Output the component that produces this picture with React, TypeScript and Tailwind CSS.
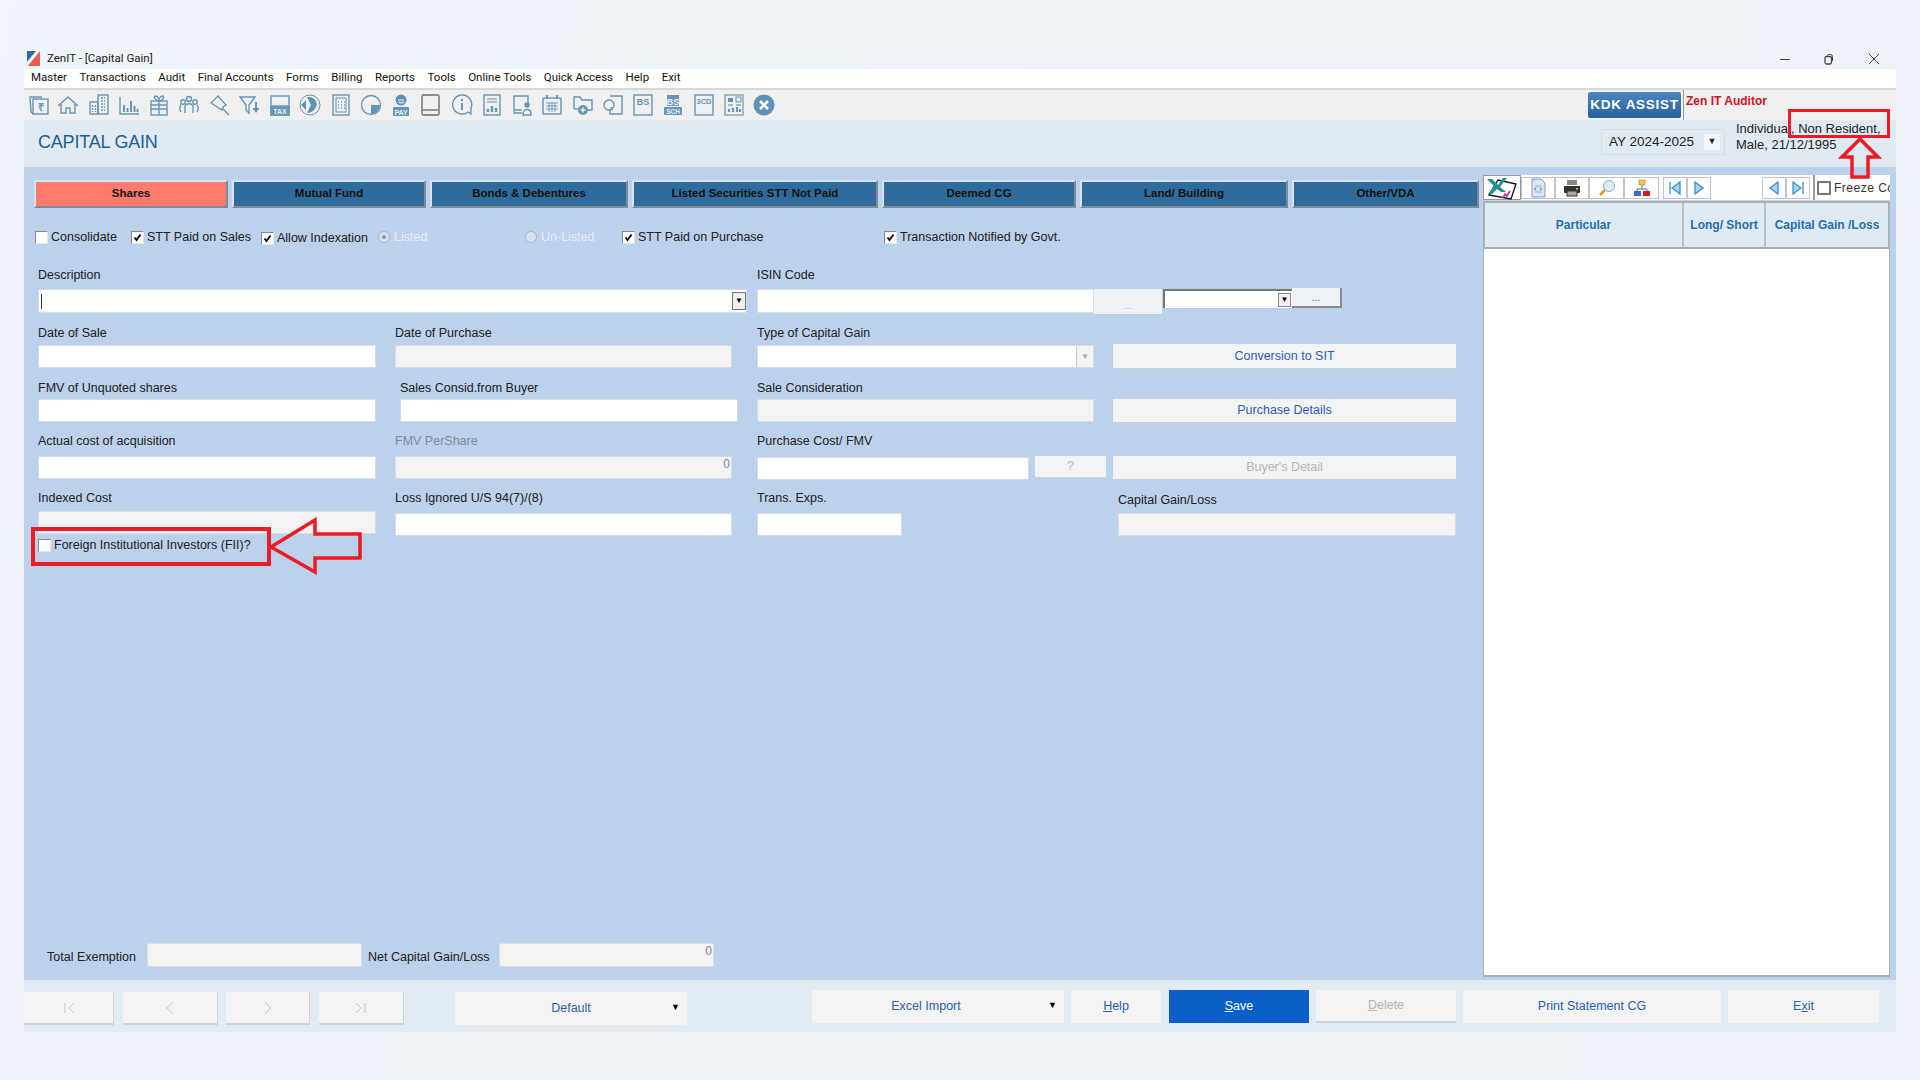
import type { ReactNode } from "react";

const menus = ["Master", "Transactions", "Audit", "Final Accounts", "Forms", "Billing", "Reports", "Tools", "Online Tools", "Quick Access", "Help", "Exit"];

const tabs = [
  { name: "Shares", width: "w-[194px]", active: true },
  { name: "Mutual Fund", width: "w-[194px]" },
  { name: "Bonds & Debentures", width: "w-[198px]" },
  { name: "Listed Securities STT Not Paid", width: "w-[246px]" },
  { name: "Deemed CG", width: "w-[194px]" },
  { name: "Land/ Building", width: "w-[208px]" },
  { name: "Other/VDA", width: "w-[187px]" },
];

function Ico({ children, color = "#6496b8" }: { children: ReactNode; color?: string }) {
  return (
    <svg width="22" height="24" viewBox="0 0 22 24" fill="none" stroke={color} strokeWidth="1.4" className="shrink-0">
      {children}
    </svg>
  );
}

function IconLabel({ x, y, size, children, fill = "#6496b8" }: { x: number; y: number; size: number; children: string; fill?: string }) {
  return (
    <text x={x} y={y} fontSize={size} fontWeight="700" fill={fill} stroke="none" textAnchor="middle" fontFamily="Liberation Sans, sans-serif">
      {children}
    </text>
  );
}

const toolbarIcons = [
  <Ico key="1"><path d="M15 4H3l1 15 3 2" /><rect x="6" y="6" width="15" height="15" /><IconLabel x={13.5} y={18} size={11}>₹</IconLabel></Ico>,
  <Ico key="2"><path d="M1 13 11 4l10 9" /><path d="M4 11v9h5v-5h4v5h5v-9" /></Ico>,
  <Ico key="3"><rect x="10" y="2" width="10" height="19" /><rect x="2" y="9" width="8" height="12" /><path d="M13 5h4M13 8h4M13 11h4M13 14h4M13 17h4M4.500 12v7M7.500 12v7" strokeDasharray="2 1" /></Ico>,
  <Ico key="4"><path d="M2 4v17h19" /><path d="M6 12v7M9.500 15v4M13 8v11M16.500 13v6M19.500 16v3" strokeWidth="2" /></Ico>,
  <Ico key="5"><rect x="3" y="8" width="16" height="14" /><path d="M3 12h16M3 16h16M11 8v14M11 8C7 8 5 3 7.500 3S11 6 11 8c0-2 1-5 3.500-5S15 8 11 8" /></Ico>,
  <Ico key="6"><circle cx="11" cy="6" r="2.500" /><circle cx="5" cy="9" r="2.200" /><circle cx="17" cy="9" r="2.200" /><path d="M7 20v-7c1-3 7-3 8 0v7M3 19c-2-3-1-6 0-7M19 19c2-3 1-6 0-7" /></Ico>,
  <Ico key="7"><path d="M2 10 9 3l8 9-3 2-1 3z" /><path d="M13 15l7 7" /></Ico>,
  <Ico key="8"><path d="M1 4h15l-6 8v8l-3-3v-5z" /><path d="M17 9v8" strokeWidth="2" /><path d="M13.500 15h7L17 20z" fill="#6496b8" stroke="none" /></Ico>,
  <Ico key="9"><rect x="2" y="3" width="18" height="19" /><rect x="2" y="13" width="18" height="9" fill="#6496b8" /><IconLabel x={11} y={21} size={7} fill="#f0f0f0">TAX</IconLabel></Ico>,
  <Ico key="10"><circle cx="11" cy="12" r="10" strokeWidth="1" /><path d="M2 12l5-5v10z" fill="#5f93b6" stroke="none" /><path d="M8 4c9-1 11 7 9 10-1 3-5 6-9 6l4-8z" fill="#5f93b6" stroke="none" /></Ico>,
  <Ico key="11"><rect x="3" y="2" width="16" height="20" /><rect x="6" y="5" width="10" height="14" strokeWidth="1" /><path d="M8 9h1M11 9h1M14 9h1M8 12h1M11 12h1M14 12h1M8 15h1M11 15h1M14 15h1" strokeWidth="1.500" /></Ico>,
  <Ico key="12"><circle cx="11" cy="12" r="9.500" /><path d="M11 12h9a9 9 0 0 1-9 9z" fill="#6496b8" stroke="none" /></Ico>,
  <Ico key="13"><circle cx="11" cy="7" r="5.500" fill="#5f93b6" stroke="none" /><path d="M8 7h6M14 9c-2 1-4 1-5 0" stroke="#f0f0f0" strokeWidth="1.200" /><rect x="3" y="14" width="16" height="9" rx="1" fill="#6496b8" stroke="none" /><IconLabel x={11} y={21.500} size={7} fill="#f0f0f0">PAY</IconLabel></Ico>,
  <Ico key="14" color="#8b8b8b"><rect x="2" y="2" width="17" height="20" rx="1.500" strokeWidth="1.800" /><path d="M3 17h16" strokeWidth="1.800" /></Ico>,
  <Ico key="15"><path d="M20 21l-3-2a9.500 9.500 0 1 1 3-4z" /><path d="M11 10v7" strokeWidth="2" /><path d="M11 6v2" strokeWidth="2" /></Ico>,
  <Ico key="16"><rect x="3" y="2" width="16" height="20" /><path d="M6 6h10M6 9h10" strokeWidth="1" /><path d="M7 19v-3M11 19v-6M15 19v-4" strokeWidth="2.400" /></Ico>,
  <Ico key="17"><path d="M11 20H3V3h14v8M3 17h8" /><circle cx="16" cy="12" r="2" fill="#6496b8" /><path d="M12 21c0-6 8-6 8 0v1h-8z" /></Ico>,
  <Ico key="18"><rect x="2" y="5" width="18" height="16" rx="1" /><path d="M6 2v4M16 2v4" strokeWidth="2" /><path d="M5 10h12M5 13h12M5 16h12M8 9v10M11 9v10M14 9v10" strokeWidth=".9" /></Ico>,
  <Ico key="19"><path d="M2 16V4h6l2 3h10v10h-4" /><path d="M2 16h5" /><circle cx="11" cy="17" r="5" fill="#6496b8" stroke="none" /><path d="M8.500 17h5M11 14.500v5" stroke="#f0f0f0" /></Ico>,
  <Ico key="20"><path d="M8 3h12v18H8v-4" /><circle cx="7" cy="12" r="5" /><path d="M8 17l2-1-1-2" /></Ico>,
  <Ico key="21"><rect x="2" y="2" width="18" height="20" /><IconLabel x={11} y={12} size={9}>BS</IconLabel></Ico>,
  <Ico key="22"><path d="M5 13V2h12v11" fill="#6496b8" stroke="none" /><IconLabel x={11} y={12} size={9} fill="#f0f0f0">BS</IconLabel><rect x="2" y="14" width="18" height="8" rx="1" fill="#6496b8" stroke="none" /><IconLabel x={11} y={21} size={6.500} fill="#f0f0f0">SCH</IconLabel></Ico>,
  <Ico key="23"><rect x="2" y="2" width="18" height="20" /><IconLabel x={11} y={11} size={7.500}>3CD</IconLabel></Ico>,
  <Ico key="24"><rect x="2" y="2" width="18" height="20" stroke="#7ba9a8" /><rect x="5" y="5" width="5" height="4" fill="#5f93b6" stroke="none" /><rect x="13" y="4" width="5" height="5" strokeWidth="1" /><path d="M5 12h5M13 12h5" strokeWidth="1.500" stroke="#7fb5a5" /><path d="M6 19v-3M10 19v-4M14 19v-5M17 19v-3" strokeWidth="2.200" /></Ico>,
  <Ico key="25"><circle cx="11" cy="12" r="10.500" fill="#5f93b6" stroke="none" /><path d="M7 8l8 8M15 8l-8 8" stroke="#fff" strokeWidth="2.600" /></Ico>,
];

function Check({ label, checked, width, dim }: { label: string; checked?: boolean; width?: string; dim?: boolean }) {
  return (
    <div className={`flex items-center gap-[3px] ${width ?? ""}`}>
      <span className="flex h-[13px] w-[13px] shrink-0 items-center justify-center border border-[#8a8a8a] border-r-[#e8e8e8] border-b-[#e8e8e8] bg-white">
        {checked && (
          <svg width="9" height="9" viewBox="0 0 9 9" fill="none" stroke="#000" strokeWidth="1.800">
            <path d="M1.500 4.500 3.500 7 7.500 1.500" />
          </svg>
        )}
      </span>
      <span className={dim ? "text-[#a9b4c4]" : "text-[#202020]"}>{label}</span>
    </div>
  );
}

function Radio({ label, dot, width }: { label: string; dot?: boolean; width: string }) {
  return (
    <div className={`flex items-center gap-[4px] ${width}`}>
      <span className="flex h-[12px] w-[12px] shrink-0 items-center justify-center rounded-full border border-[#aab3bf] bg-[#d8e2ef]">
        {dot && <span className="h-[4px] w-[4px] rounded-full bg-[#8f98a5]" />}
      </span>
      <span className="text-[#e8eef6]">{label}</span>
    </div>
  );
}

function Input({ height = "h-[23px]", off, value, arrow }: { height?: string; off?: boolean; value?: string; arrow?: boolean }) {
  return (
    <div className={`flex w-full items-start justify-end border border-[#d6dce5] ${height} ${off ? "bg-[#f3f3f3]" : "bg-white"}`}>
      {value && <span className="pr-[1px] text-[12px] leading-[14px] text-[#8a8a8a]">{value}</span>}
      {arrow && (
        <span className="flex h-full w-[17px] items-center justify-center border-l border-[#c8c8c8] bg-[#f4f4f4] text-[8px] text-[#a8a8a8]">▼</span>
      )}
    </div>
  );
}

function Field({ label, width, gap, height, off, value, arrow, dim, className = "" }: { label: string; width: string; gap: string; height?: string; off?: boolean; value?: string; arrow?: boolean; dim?: boolean; className?: string }) {
  return (
    <div className={`shrink-0 ${width} ${className}`}>
      <div className={`h-[16px] leading-[16px] ${gap} ${dim ? "text-[#7f8b9b]" : "text-[#202020]"}`}>{label}</div>
      <Input height={height} off={off} value={value} arrow={arrow} />
    </div>
  );
}

function FormButton({ label, className, muted }: { label: string; className: string; muted?: boolean }) {
  return (
    <div className={`flex shrink-0 items-center justify-center border-b border-[#c9d3df] bg-[#f3f3f3] ${muted ? "text-[#b5b5b5]" : "text-[#2d5cb5]"} ${className}`}>
      {label}
    </div>
  );
}

function NavButton({ className, d }: { className: string; d: string }) {
  return (
    <div className={`flex h-[33px] shrink-0 items-center justify-center border-r border-b-2 border-r-[#d0d4da] border-b-[#d0d4da] bg-[#f3f3f3] ${className}`}>
      <svg width="16" height="18" viewBox="0 0 16 18" fill="none" stroke="#c6c6c6" strokeWidth="1">
        <path d={d} />
      </svg>
    </div>
  );
}

function BarButton({ className, children, arrow }: { className: string; children: ReactNode; arrow?: boolean }) {
  return (
    <div className={`relative flex h-[33px] shrink-0 items-center justify-center text-[12.5px] ${className}`}>
      {children}
      {arrow && <span className="absolute right-[7px] top-[9px] text-[9px] text-black">▼</span>}
    </div>
  );
}

function GridTool({ children, width = "w-[34px]" }: { children: ReactNode; width?: string }) {
  return (
    <div className={`flex h-[22px] shrink-0 items-center justify-center border border-[#c4c4c4] bg-white ${width}`}>
      {children}
    </div>
  );
}

function GridNav({ d }: { d: string }) {
  return (
    <div className="flex h-[22px] w-[24px] shrink-0 items-center justify-center border border-[#c4c4c4] bg-white">
      <svg width="16" height="16" viewBox="0 0 16 16" fill="#a9d2ee" stroke="#3f8fc4" strokeWidth="1.300">
        <path d={d} />
      </svg>
    </div>
  );
}

export default function App() {
  return (
    <div className="relative h-[1080px] w-[1920px] overflow-hidden bg-[linear-gradient(100deg,#eef4fa_0%,#eff3f7_60%,#eef3f9_100%)] pl-[24px] pt-[48px] text-[12.5px] [font-family:'Liberation_Sans',Arial,sans-serif]">
      <div className="flex w-[1872px] flex-col">
        {/* window title */}
        <div className="flex h-[21px] items-center [font-family:Roboto,sans-serif] text-[11.5px] text-[#222]">
          <svg width="16" height="17" viewBox="0 0 16 17" className="ml-[2px] mr-[5px] shrink-0">
            <path d="M1 1h9L1 12z" fill="#2f6aa6" />
            <path d="M14 1h-2L2 16h12z" fill="#ef5b4c" />
            <path d="M11 1h3L4 13H1z" fill="#fff" />
          </svg>
          ZenIT - [Capital Gain]
          <div className="ml-auto flex items-center pr-[16px]">
            <svg width="12" height="12" viewBox="0 0 12 12" stroke="#444" fill="none"><path d="M1 6.500h10" /></svg>
            <svg width="12" height="12" viewBox="0 0 12 12" stroke="#444" fill="none" className="ml-[32px]"><rect x="2" y="3.500" width="6.500" height="7.500" rx="1.500" strokeWidth="1.300" /><path d="M4.500 3.500V2.500a1 1 0 0 1 1-1h2a2 2 0 0 1 2 2V8" /></svg>
            <svg width="12" height="12" viewBox="0 0 12 12" stroke="#444" fill="none" className="ml-[33px]"><path d="M1 1l10 10M11 1 1 11" /></svg>
          </div>
        </div>

        {/* menu */}
        <div className="flex h-[21px] items-center gap-[12.500px] border-b-2 border-[#d8d8d8] bg-white pb-[1px] pl-[7px] [font-family:Roboto,sans-serif] text-[11.5px] text-[#111]">
          {menus.map((menu) => (
            <span key={menu}>{menu}</span>
          ))}
        </div>

        {/* toolbar */}
        <div className="flex h-[30px] items-center bg-[#f0f0f0] pl-[3px]">
          <div className="flex items-center gap-[8.250px]">{toolbarIcons}</div>
          <div className="ml-auto flex h-full w-[308px] items-start">
            <div className="mt-[2px] flex h-[26px] w-[93px] items-center justify-center rounded-[2px] bg-[linear-gradient(180deg,#4a86c0_0%,#2a609f_100%)] text-[13.5px] font-bold tracking-[0.7px] text-white">
              KDK ASSIST
            </div>
            <div className="ml-[2px] h-full w-px bg-[#9a9a9a]" />
            <span className="ml-[2px] mt-[2px] text-[12px] font-bold text-[#d0141c]">Zen IT Auditor</span>
          </div>
        </div>

        {/* form header */}
        <div className="flex h-[47px] items-start bg-[#e0eaf3] pl-[14px]">
          <h1 className="mt-[10px] text-[18px] leading-[24px] tracking-[-0.2px] text-[#1c5f96]">CAPITAL GAIN</h1>
          <div className="ml-auto mt-[9px] flex h-[26px] w-[124px] items-center border border-[#d5dce3] pl-[7px] text-[13.5px] text-[#222]">
            AY 2024-2025
            <span className="ml-auto mr-[4px] flex h-[16px] w-[16px] items-center justify-center bg-[#f4f6f8] text-[9px] text-[#222]">▼</span>
          </div>
          <div className="ml-[11px] mr-[6px] mt-[1px] w-[154px] text-[13px] leading-[16px] text-[#222]">
            Individual, Non Resident, Male, 21/12/1995
          </div>
        </div>

        {/* main panel */}
        <div className="flex h-[813px] bg-[#bcd1ec]">
          <div className="flex w-[1455px] shrink-0 flex-col pt-[13px]">
            <div className="flex gap-[4px] pl-[10px]">
              {tabs.map((tab) => (
                <div
                  key={tab.name}
                  className={`flex h-[28px] items-center justify-center border-2 border-t-[#d9e3f0] border-l-[#d9e3f0] border-r-[#7f8a96] border-b-[#7f8a96] text-[11.5px] font-bold text-[#111] ${tab.width} ${tab.active ? "bg-[#ff7b6e]" : "bg-[#2f6c9b]"}`}
                >
                  {tab.name}
                </div>
              ))}
            </div>

            <div className="mt-[21px] flex h-[16px] items-center pl-[11px]">
              <Check label="Consolidate" width="w-[96px]" />
              <Check label="STT Paid on Sales" checked width="w-[130px]" />
              <Check label="Allow Indexation" checked width="w-[117px] pt-[2px]" />
              <Radio label="Listed" dot width="w-[147px]" />
              <Radio label="Un-Listed" width="w-[97px]" />
              <Check label="STT Paid on Purchase" checked width="w-[262px]" />
              <Check label="Transaction Notified by Govt." checked />
            </div>

            <div className="mt-[22px] flex items-start pl-[14px]">
              <div className="w-[709px] shrink-0">
                <div className="mb-[6px] h-[16px] leading-[16px] text-[#202020]">Description</div>
                <div className="flex h-[24px] items-center border border-[#d6dce5] bg-white pl-[2px]">
                  <span className="h-[15px] w-px bg-[#333]" />
                  <span className="ml-auto flex h-[18px] w-[14px] items-center justify-center border border-[#777] bg-[#f0f0f0] text-[8px] text-black">▼</span>
                </div>
              </div>
              <Field label="ISIN Code" width="w-[337px]" gap="mb-[6px]" height="h-[24px]" className="ml-[10px]" />
              <div className="mt-[22px] flex h-[25px] w-[68px] shrink-0 items-end justify-center bg-[#eef1f5] pb-[3px] text-[10px] leading-[10px] text-[#9fb1d0]">...</div>
              <div className="ml-[1px] mt-[22px] flex h-[19px] w-[129px] shrink-0 items-center justify-end border-l-2 border-t-2 border-[#777] bg-white pr-[1px]">
                <span className="flex h-[14px] w-[13px] items-center justify-center border border-[#888] bg-[#f0f0f0] text-[8px] text-black">▼</span>
              </div>
              <div className="mt-[21px] flex h-[20px] w-[50px] shrink-0 items-end justify-center border-b-2 border-r-2 border-[#8a8a8a] bg-[#eef1f5] pb-[3px] text-[10px] leading-[10px] text-[#555]">...</div>
            </div>

            <div className="mt-[11px] flex items-start pl-[14px]">
              <Field label="Date of Sale" width="w-[338px]" gap="mb-[4px]" />
              <Field label="Date of Purchase" width="w-[337px]" gap="mb-[4px]" off className="ml-[19px]" />
              <Field label="Type of Capital Gain" width="w-[337px]" gap="mb-[4px]" arrow className="ml-[25px]" />
              <FormButton label="Conversion to SIT" className="ml-[19px] mt-[19px] h-[25px] w-[343px]" />
            </div>

            <div className="mt-[11px] flex items-start pl-[14px]">
              <Field label="FMV of Unquoted shares" width="w-[338px]" gap="mb-[3px]" />
              <Field label="Sales Consid.from Buyer" width="w-[338px]" gap="mb-[3px]" className="ml-[24px]" />
              <Field label="Sale Consideration" width="w-[337px]" gap="mb-[3px]" off className="ml-[19px]" />
              <FormButton label="Purchase Details" className="ml-[19px] mt-[19px] h-[24px] w-[343px]" />
            </div>

            <div className="mt-[10px] flex items-start pl-[14px]">
              <Field label="Actual cost of acquisition" width="w-[338px]" gap="mb-[7px]" />
              <Field label="FMV PerShare" width="w-[337px]" gap="mb-[7px]" off dim value="0" className="ml-[19px]" />
              <Field label="Purchase Cost/ FMV" width="w-[272px]" gap="mb-[8px]" className="ml-[25px]" />
              <FormButton label="?" muted className="ml-[6px] mt-[23px] h-[22px] w-[71px]" />
              <FormButton label="Buyer's Detail" muted className="ml-[7px] mt-[23px] h-[24px] w-[343px]" />
            </div>

            <div className="mt-[10px] flex items-start pl-[14px]">
              <div className="w-[338px] shrink-0">
                <Field label="Indexed Cost" width="w-[338px]" gap="mb-[5px]" off />
                <div className="mt-[2px]">
                  <Check label="Foreign Institutional Investors (FII)?" />
                </div>
              </div>
              <Field label="Loss Ignored U/S 94(7)/(8)" width="w-[337px]" gap="mb-[7px]" className="ml-[19px]" />
              <Field label="Trans. Exps." width="w-[145px]" gap="mb-[7px]" className="ml-[25px]" />
              <Field label="Capital Gain/Loss" width="w-[338px]" gap="mb-[5px]" off className="ml-[216px] mt-[2px]" />
            </div>

            <div className="mb-[13px] mt-auto flex items-center pl-[23px]">
              <span className="w-[100px] shrink-0 pt-[6px] text-[#202020]">Total Exemption</span>
              <div className="w-[215px] shrink-0"><Input height="h-[24px]" off /></div>
              <span className="ml-[6px] w-[131px] shrink-0 pt-[6px] text-[#202020]">Net Capital Gain/Loss</span>
              <div className="w-[215px] shrink-0"><Input height="h-[24px]" off value="0" /></div>
            </div>
          </div>

          {/* right grid */}
          <div className="ml-[4px] mb-[3px] mt-[8px] flex w-[407px] flex-col">
            <div className="flex h-[25px] items-center overflow-hidden bg-white">
              <div className="flex h-full w-[38px] shrink-0 items-center justify-center border border-[#999]">
                <svg width="34" height="24" viewBox="0 0 34 24" fill="none">
                  <path d="M4 19 13 4l18 4-5 15z" stroke="#111" strokeWidth="1.300" fill="#fff" />
                  <path d="M2 3h5l6 6 5-7h4l-7 9 6 5h-5l-4-3-5 5H3l6-8z" fill="#1f8f94" />
                  <path d="M18 22l2-4 2 2 3-5" stroke="#d0208a" strokeWidth="1.500" />
                </svg>
              </div>
              <GridTool>
                <svg width="18" height="20" viewBox="0 0 18 20"><path d="M3 1h9l4 4v14H3z" fill="#dbe7f5" stroke="#7d9cc0" /><path d="M6 8h7M6 14h7" stroke="#8fb0d4" /><path d="M7 9.500 5.500 11 7 12.500M11 9.500l1.500 1.500-1.500 1.500" stroke="#2a6fb0" fill="none" /></svg>
              </GridTool>
              <GridTool>
                <svg width="20" height="18" viewBox="0 0 20 18"><rect x="5" y="1" width="10" height="5" fill="#888" /><path d="M2 7h16v7H2z" fill="#333" /><rect x="5" y="12" width="10" height="5" fill="#aaa" stroke="#333" /><rect x="14" y="9" width="2" height="1.500" fill="#e6c33a" /></svg>
              </GridTool>
              <GridTool width="w-[35px]">
                <svg width="18" height="18" viewBox="0 0 18 18" fill="none"><circle cx="11" cy="7" r="5.500" fill="#dcecfa" stroke="#8aa9c7" /><path d="M7 11 2 16" stroke="#d99a2b" strokeWidth="2.500" /></svg>
              </GridTool>
              <GridTool width="w-[35px]">
                <svg width="18" height="18" viewBox="0 0 18 18"><rect x="6" y="1" width="6" height="5" fill="#f0c24b" stroke="#b08a20" strokeWidth=".6" /><path d="M9 6v4M4 12v-2h10v2" stroke="#4a6fa8" fill="none" /><rect x="1" y="12" width="7" height="5" fill="#3a68c4" /><rect x="10" y="12" width="7" height="5" fill="#d2191f" /></svg>
              </GridTool>
              <div className="ml-[4px]"><GridNav d="M3 2v12M13 2 5 8l8 6z" /></div>
              <GridNav d="M4 2l8 6-8 6z" />
              <div className="ml-[51px]"><GridNav d="M12 2 4 8l8 6z" /></div>
              <GridNav d="M13 2v12M3 2l8 6-8 6z" />
              <div className="ml-[3px] h-full w-[2px] shrink-0 bg-[#999]" />
              <span className="ml-[2px] h-[14px] w-[14px] shrink-0 border-2 border-[#777] bg-white" />
              <span className="ml-[3px] whitespace-nowrap text-[12px] tracking-[0.5px] text-[#333]">Freeze Columns</span>
            </div>

            <div className="mt-[1px] flex h-[48px] border-2 border-[#a9afb6] bg-[#e0eaf3] text-[12px] font-bold text-[#2270ad]">
              <div className="flex w-[199px] items-center justify-center border-r-2 border-[#b9c0c8]">Particular</div>
              <div className="flex w-[82px] items-center justify-center border-r-2 border-[#b9c0c8]">Long/ Short</div>
              <div className="flex flex-1 items-center justify-center">Capital Gain /Loss</div>
            </div>
            <div className="flex-1 border-x border-b-2 border-[#a9afb6] bg-white" />
          </div>
        </div>

        {/* bottom buttons */}
        <div className="flex h-[52px] items-start bg-[#e1ebf4] text-[#2d5cb5]">
          <NavButton className="mt-[12px] w-[90px]" d="M4 4v10M13 4 8 9l5 5" />
          <NavButton className="ml-[9px] mt-[12px] w-[95px]" d="M11 3 5 9l6 6" />
          <NavButton className="ml-[8px] mt-[12px] w-[84px]" d="m5 3 6 6-6 6" />
          <NavButton className="ml-[9px] mt-[12px] w-[85px]" d="M12 4v10M3 4l5 5-5 5" />
          <BarButton arrow className="ml-[51px] mt-[12px] w-[232px] bg-[#f3f3f3]">Default</BarButton>
          <BarButton arrow className="ml-[125px] mt-[10px] w-[252px] bg-[#f3f3f3]"><span className="pr-[24px]">Excel Import</span></BarButton>
          <BarButton className="ml-[7px] mt-[10px] w-[90px] bg-[#f3f3f3]"><span><u>H</u>elp</span></BarButton>
          <BarButton className="ml-[8px] mt-[10px] w-[140px] bg-[#0a60c6] text-white"><span><u>S</u>ave</span></BarButton>
          <BarButton className="ml-[7px] mt-[10px] w-[140px] border-b-2 border-[#cfd3d8] bg-[#f3f3f3] text-[#b5b5b5]"><span><u>D</u>elete</span></BarButton>
          <BarButton className="ml-[7px] mt-[10px] w-[258px] bg-[#f3f3f3]">Print Statement CG</BarButton>
          <BarButton className="ml-[7px] mt-[10px] w-[151px] bg-[#f3f3f3]"><span>E<u>x</u>it</span></BarButton>
        </div>
      </div>

      {/* red annotations drawn over the screen */}
      <div className="absolute left-[1788px] top-[109px] h-[29px] w-[102px] border-[3.5px] border-[#ed1c24]" />
      <svg className="absolute left-[1838px] top-[137px]" width="44" height="42" viewBox="0 0 44 42" fill="none" stroke="#ed1c24" strokeWidth="3.500">
        <path d="M22 2 4 20h10v20h16V20h10z" />
      </svg>
      <div className="absolute left-[31px] top-[527px] h-[39px] w-[240px] border-[4px] border-[#ed1c24]" />
      <svg className="absolute left-[268px] top-[517px]" width="95" height="58" viewBox="0 0 95 58" fill="none" stroke="#ed1c24" strokeWidth="3.500">
        <path d="M3 30 47 3v14h45v24H47v14z" />
      </svg>
    </div>
  );
}
